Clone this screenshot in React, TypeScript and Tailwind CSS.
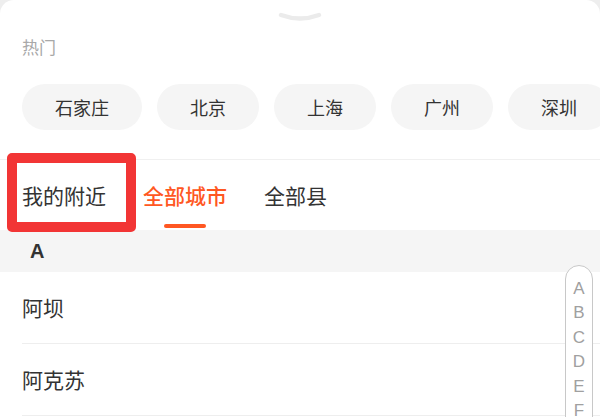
import * as React from "react";

const hotCities = ["石家庄", "北京", "上海", "广州", "深圳"];
const tabs = ["我的附近", "全部城市", "全部县"];
const cities = ["阿坝", "阿克苏"];
const letters = ["A", "B", "C", "D", "E", "F"];

const App = () => {
  const active = 1;

  return (
    <div
      className="relative w-[600px] h-[417px] overflow-hidden bg-[#eeeeee]"
      style={{ fontFamily: '"Noto Sans CJK SC", "Noto Sans", sans-serif' }}
    >
      <div className="h-full bg-white rounded-t-[14px]">
        {/* Drag handle */}
        <div className="h-[30px] flex justify-center">
          <svg width="44" height="30" viewBox="0 0 44 30">
            <path d="M3 15 Q22 22 41 15" fill="none" stroke="#ebebeb" strokeWidth="4.5" strokeLinecap="round" />
          </svg>
        </div>

        {/* Hot cities */}
        <div className="border-b border-[#f0f0f0]">
          <div className="h-[34px] flex items-center px-[22px] text-[17px] text-[#a8a8a8]">热门</div>
          <div className="mt-[20px] mb-[29px] flex gap-[15px] pl-[22px] overflow-hidden">
            {hotCities.map((c) => (
              <div
                key={c}
                className="shrink-0 h-[46px] px-[33px] flex items-center rounded-full bg-[#f5f5f5] text-[18px] text-[#333333]"
              >
                {c}
              </div>
            ))}
          </div>
        </div>

        {/* Tabs */}
        <div className="relative h-[70px] flex items-start gap-[37px] px-[22px] pt-[21px]">
          {tabs.map((t, i) => (
            <div key={t} className="flex flex-col items-center">
              <span
                className={`text-[21px] leading-[28px] ${
                  i === active ? "text-[#ff5722] font-medium" : "text-[#333333]"
                }`}
              >
                {t}
              </span>
              <span
                className={`mt-[15px] h-[4px] w-[42px] rounded-full ${i === active ? "bg-[#ff5722]" : "bg-transparent"}`}
              />
            </div>
          ))}
          {/* annotation box */}
          <div className="absolute left-[7px] top-[-7px] w-[129px] h-[79px] border-[10px] border-[#f23535] rounded-[5px]" />
        </div>

        {/* Section header */}
        <div
          className="h-[42px] bg-[#f5f5f5] flex items-center pl-[30px] text-[20px] font-bold text-[#333333]"
          style={{ fontFamily: '"Liberation Sans", sans-serif' }}
        >
          A
        </div>

        {/* City list */}
        {cities.map((c) => (
          <div key={c} className="pl-[22px]">
            <div className="h-[72px] flex items-center border-b border-[#eeeeee] text-[21px] text-[#333333]">{c}</div>
          </div>
        ))}
      </div>

      {/* Letter index */}
      <div className="absolute left-[565px] top-[265px] w-[28px] pt-[10px] pb-[10px] rounded-full border-[1.5px] border-[#c8c8c8] bg-white flex flex-col items-center">
        {letters.map((l) => (
          <div
            key={l}
            className="h-[24.5px] flex items-center text-[17px] text-[#a0a0a0]"
            style={{ fontFamily: '"Liberation Sans", sans-serif' }}
          >
            {l}
          </div>
        ))}
      </div>
    </div>
  );
};

export default App;
